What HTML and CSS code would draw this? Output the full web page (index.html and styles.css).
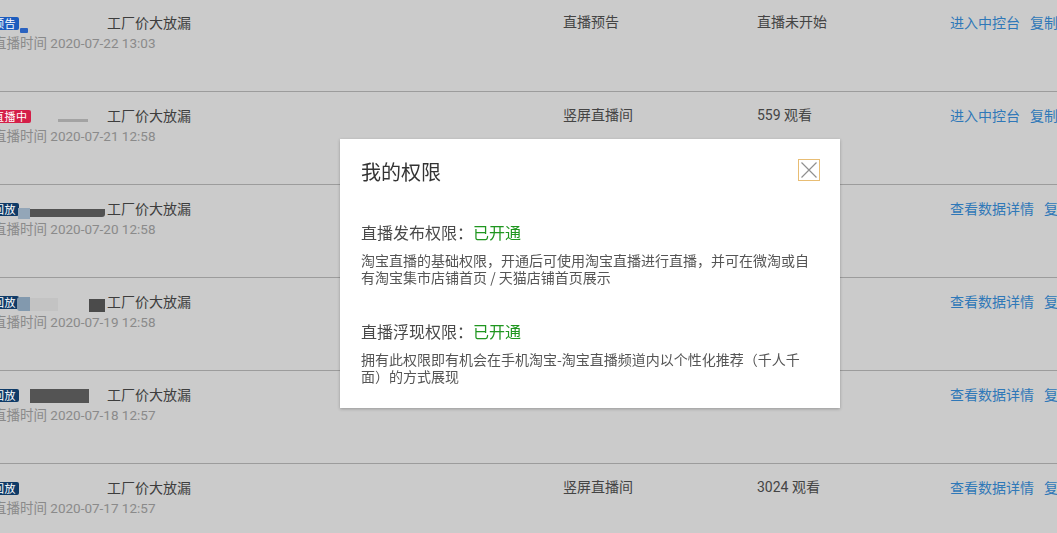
FILE: index.html
```html
<!DOCTYPE html>
<html lang="zh-CN">
<head>
<meta charset="utf-8">
<title>我的权限</title>
<link rel="stylesheet" href="styles.css">
</head>
<body>
<div class="page">
  <div class="list">
    <div class="row">
      <div class="c-main">
        <div class="line1">
          <div class="media"><span class="badge b-pre">预告</span><span class="mask m1a"></span></div>
          <span class="title">工厂价大放漏</span>
        </div>
        <div class="time">直播时间 2020-07-22 13:03</div>
      </div>
      <div class="c-type">直播预告</div>
      <div class="c-stat">直播未开始</div>
      <div class="c-ops"><a>进入中控台</a><a>复制链接</a></div>
    </div>
    <div class="row">
      <div class="c-main">
        <div class="line1">
          <div class="media"><span class="badge b-live">直播中</span><span class="mask m2a"></span></div>
          <span class="title">工厂价大放漏</span>
        </div>
        <div class="time">直播时间 2020-07-21 12:58</div>
      </div>
      <div class="c-type">竖屏直播间</div>
      <div class="c-stat">559 观看</div>
      <div class="c-ops"><a>进入中控台</a><a>复制链接</a></div>
    </div>
    <div class="row">
      <div class="c-main">
        <div class="line1">
          <div class="media"><span class="badge b-rep">回放</span><span class="mask m3a"></span><span class="mask m3b"></span></div>
          <span class="title">工厂价大放漏</span>
        </div>
        <div class="time">直播时间 2020-07-20 12:58</div>
      </div>
      <div class="c-type">竖屏直播间</div>
      <div class="c-stat">2156 观看</div>
      <div class="c-ops"><a>查看数据详情</a><a>复制链接</a></div>
    </div>
    <div class="row">
      <div class="c-main">
        <div class="line1">
          <div class="media"><span class="badge b-rep">回放</span><span class="mask m4a"></span><span class="mask m4b"></span><span class="mask m4c"></span></div>
          <span class="title">工厂价大放漏</span>
        </div>
        <div class="time">直播时间 2020-07-19 12:58</div>
      </div>
      <div class="c-type">竖屏直播间</div>
      <div class="c-stat">1873 观看</div>
      <div class="c-ops"><a>查看数据详情</a><a>复制链接</a></div>
    </div>
    <div class="row">
      <div class="c-main">
        <div class="line1">
          <div class="media"><span class="badge b-rep">回放</span><span class="mask m5a"></span></div>
          <span class="title">工厂价大放漏</span>
        </div>
        <div class="time">直播时间 2020-07-18 12:57</div>
      </div>
      <div class="c-type">竖屏直播间</div>
      <div class="c-stat">2540 观看</div>
      <div class="c-ops"><a>查看数据详情</a><a>复制链接</a></div>
    </div>
    <div class="row">
      <div class="c-main">
        <div class="line1">
          <div class="media"><span class="badge b-rep">回放</span></div>
          <span class="title">工厂价大放漏</span>
        </div>
        <div class="time">直播时间 2020-07-17 12:57</div>
      </div>
      <div class="c-type">竖屏直播间</div>
      <div class="c-stat">3024 观看</div>
      <div class="c-ops"><a>查看数据详情</a><a>复制链接</a></div>
    </div>
  </div>
</div>

<div class="modal">
  <div class="modal-head">
    <h2 class="modal-title">我的权限</h2>
    <button class="close" aria-label="关闭">
      <svg width="20" height="20" viewBox="0 0 20 20"><path d="M2.5 2.5 L17.5 17.5 M17.5 2.5 L2.5 17.5" stroke="#909090" stroke-width="1.2" fill="none"/></svg>
    </button>
  </div>
  <div class="perm">
    <div class="perm-label">直播发布权限：<span class="ok">已开通</span></div>
    <p class="perm-desc">淘宝直播的基础权限，开通后可使用淘宝直播进行直播，并可在微淘或自有淘宝集市店铺首页 / 天猫店铺首页展示</p>
  </div>
  <div class="perm">
    <div class="perm-label">直播浮现权限：<span class="ok">已开通</span></div>
    <p class="perm-desc">拥有此权限即有机会在手机淘宝-淘宝直播频道内以个性化推荐（千人千面）的方式展现</p>
  </div>
</div>
</body>
</html>
```

FILE: styles.css
```css
html, body {
  margin: 0;
  padding: 0;
  background: #cbcbcb;
  overflow: hidden;
  height: 100%;
}
body {
  font-family: Roboto, "Noto Sans CJK SC", sans-serif;
  color: #3d3d3d;
}
.page {
  width: 1057px;
  height: 533px;
  overflow: hidden;
}
.list {
  margin-top: -1px;
}
.row {
  display: grid;
  grid-template-columns: 568px 194px 193px 1fr;
  height: 92px;
  border-bottom: 1px solid #9c9c9c;
  margin-left: -5px;
  white-space: nowrap;
}
.c-main {
  padding-top: 13px;
}
.line1 {
  display: flex;
  align-items: center;
  height: 20px;
}
.media {
  position: relative;
  width: 112px;
  height: 20px;
  display: flex;
  align-items: center;
  flex: none;
}
.badge {
  margin-left: -5px;
  margin-top: 3px;
  height: 13px;
  line-height: 13px;
  font-size: 11px;
  padding: 0 3px;
  border-radius: 2px;
  color: #fff;
  font-family: "Noto Sans CJK SC", sans-serif;
  letter-spacing: 0.5px;
}
.b-pre { background: #1c5cbe; }
.b-live { background: #d41f48; }
.b-rep { background: #0f3b68; }
.mask {
  position: absolute;
  display: block;
}
.m1a { left: 25px; top: 16px; width: 8px; height: 5px; background: #2a62c0; border-radius: 1px; }
.m2a { left: 63px; top: 14px; width: 30px; height: 3px; background: #a3a3a3; }
.m3a { left: 23px; top: 10px; width: 12px; height: 11px; background: #93a6b8; }
.m3b { left: 35px; top: 11px; width: 75px; height: 8px; background: #525252; border-radius: 0 0 3px 0; }
.m4a { left: 22px; top: 6px; width: 13px; height: 14px; background: #8299ae; border-radius: 3px 0 0 3px; }
.m4b { left: 35px; top: 7px; width: 28px; height: 13px; background: #c3c3c3; }
.m4c { left: 94px; top: 8px; width: 16px; height: 13px; background: #4b4b4b; }
.m5a { left: 35px; top: 5px; width: 59px; height: 14px; background: #545454; }
.title {
  font-size: 14px;
  line-height: 20px;
  color: #3d3d3d;
  font-family: "Noto Sans CJK SC", sans-serif;
}
.time {
  margin-top: 1px;
  margin-left: -2px;
  font-size: 13.5px;
  line-height: 20px;
  color: #8a8a8a;
}
.c-type, .c-stat {
  padding-top: 13px;
  font-size: 14px;
  line-height: 20px;
  color: #444;
}
.c-ops {
  padding-top: 13px;
  font-size: 14px;
  line-height: 20px;
  display: flex;
  gap: 10px;
}
.c-ops a {
  color: #2f78b8;
  font-family: "Noto Sans CJK SC", sans-serif;
}

.modal {
  position: fixed;
  left: 340px;
  top: 139px;
  width: 500px;
  height: 269px;
  box-sizing: border-box;
  background: #fff;
  padding: 19px 20px 0 21px;
  box-shadow: 0 1px 3px rgba(0,0,0,0.25);
  font-family: "Noto Sans CJK SC", sans-serif;
}
.modal-head {
  display: flex;
  justify-content: space-between;
  align-items: flex-start;
  height: 28px;
}
.modal-title {
  margin: 0;
  font-size: 20px;
  line-height: 28px;
  font-weight: normal;
  color: #333;
}
.close {
  margin-top: 1px;
  width: 22px;
  height: 22px;
  padding: 0;
  border: 1.5px solid #e8bd74;
  background: #fff;
  display: flex;
  align-items: center;
  justify-content: center;
  box-sizing: border-box;
}
.perm {
  margin-top: 34px;
}
.perm + .perm {
  margin-top: 33px;
}
.perm-label {
  font-size: 16px;
  line-height: 24px;
  color: #4a4a4a;
}
.ok {
  color: #1f961f;
}
.perm-desc {
  margin: 8px 0 0;
  font-size: 14px;
  line-height: 17px;
  color: #555;
}
```
